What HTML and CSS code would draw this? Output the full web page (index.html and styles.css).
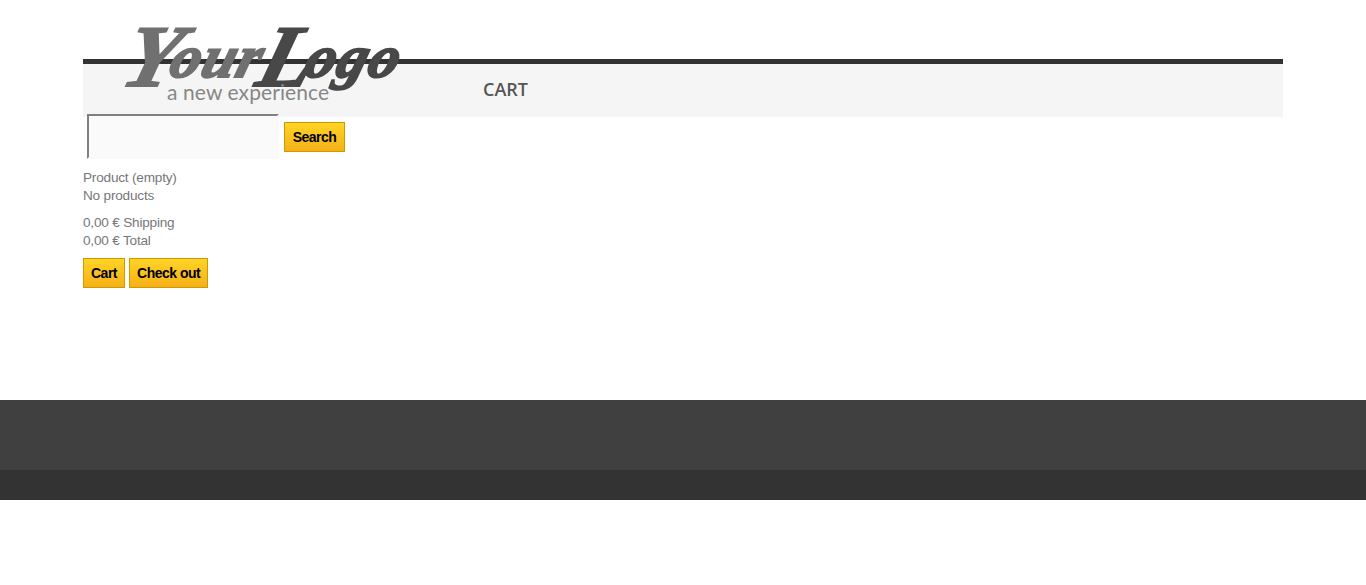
FILE: index.html
```html
<!DOCTYPE html>
<html>
<head>
   <meta charset="utf-8">
   <title>Cart</title>
   <link rel="stylesheet" href="styles.css">
</head>
<body>
<div id="page">
   <div id="header">
      <a class="logo" href="#">
         <span class="logoMark"><span class="logoYour"><span class="logoCap">Y</span>our</span><span class="logoLogo"><span class="logoCap">L</span>ogo</span></span>
         <span class="logoTag">a new experience</span>
      </a>
      <div class="menu">CART</div>
   </div>
   <form class="searchBox" onsubmit="return false;">
      <input class="searchText" type="text">
      <button class="btn btnSearch" type="submit">Search</button>
   </form>
   <div class="cartBlock">
      <div>Product (empty)</div>
      <div>No products</div>
      <div class="cartTotals">
         <div>0,00 € Shipping</div>
         <div>0,00 € Total</div>
      </div>
      <div class="cartButtons">
         <a class="btn" href="#">Cart</a>
         <a class="btn" href="#">Check out</a>
      </div>
   </div>
</div>
<div id="footer">
   <div class="footerTop"></div>
   <div class="footerBottom"></div>
</div>
</body>
</html>
```
FILE: styles.css
```css
body {
   background-color: rgb(255,255,255);
   font-family: "Liberation Sans", Arial, sans-serif;
   margin: 0;
   padding: 0;
}
#page {
   width: 1200px;
   height: 400px;
   margin: 0 auto;
   padding-top: 59px;
   box-sizing: border-box;
}

/* Header */
#header {
   position: relative;
   height: 53px;
   border-top: 5px solid rgb(51,51,51);
   background-color: rgb(245,245,245);
}
.logo {
   position: absolute;
   left: 43px;
   top: -37px;
   width: 280px;
   height: 80px;
   text-decoration: none;
}
.logoMark {
   position: absolute;
   left: -12px;
   top: -15px;
   white-space: nowrap;
   font-family: "Liberation Serif", serif;
   font-size: 60px;
   font-style: italic;
   font-weight: bold;
   line-height: 90px;
   letter-spacing: 1.5px;
   -webkit-text-stroke: 2px currentColor;
   transform: skewX(-16deg);
   transform-origin: left bottom;
}
.logoCap {
   font-size: 88px;
   line-height: 60px;
   vertical-align: -9px;
   letter-spacing: -8px;
}
.logoYour {
   color: rgb(112,112,112);
}
.logoLogo {
   color: rgb(72,72,72);
   margin-left: -2px;
}
.logoTag {
   position: absolute;
   left: 41px;
   top: 52px;
   font-family: Lato, sans-serif;
   font-size: 21px;
   line-height: 26px;
   letter-spacing: 0.1px;
   white-space: nowrap;
   color: rgb(135,135,135);
}
.menu {
   padding: 13px 0 0 400px;
   font-family: "Open Sans", sans-serif;
   font-size: 18px;
   font-weight: 600;
   line-height: 24px;
   color: rgb(85,85,85);
}

/* Search */
.searchBox {
   position: relative;
   display: flex;
   align-items: center;
   gap: 5px;
   margin: -3px 0 0 4px;
}
.searchText {
   width: 192px;
   height: 45px;
   box-sizing: border-box;
   margin: 0;
   padding: 0;
   border: 2px solid rgb(250,250,250);
   border-top-color: rgb(128,128,128);
   border-left-color: rgb(128,128,128);
   background-color: rgb(250,250,250);
}
.btn {
   display: block;
   box-sizing: border-box;
   height: 30px;
   padding: 0 7px;
   border: 1px solid rgb(204,153,0);
   background: linear-gradient(rgb(255,212,38), rgb(245,176,22));
   color: rgb(0,0,0);
   font-family: "Liberation Sans", Arial, sans-serif;
   font-size: 14px;
   font-weight: bold;
   letter-spacing: -0.5px;
   line-height: 28px;
   text-decoration: none;
}
.btnSearch {
   width: 61px;
   padding: 0;
}

/* Cart */
.cartBlock {
   margin-top: 10px;
   font-size: 13.6px;
   letter-spacing: -0.2px;
   line-height: 18px;
   color: rgb(119,119,119);
}
.cartTotals {
   margin-top: 9px;
}
.cartButtons {
   display: flex;
   gap: 4px;
   margin-top: 8px;
}

/* Footer */
.footerTop {
   height: 70px;
   background-color: rgb(64,64,64);
}
.footerBottom {
   height: 30px;
   background-color: rgb(51,51,51);
}
```
